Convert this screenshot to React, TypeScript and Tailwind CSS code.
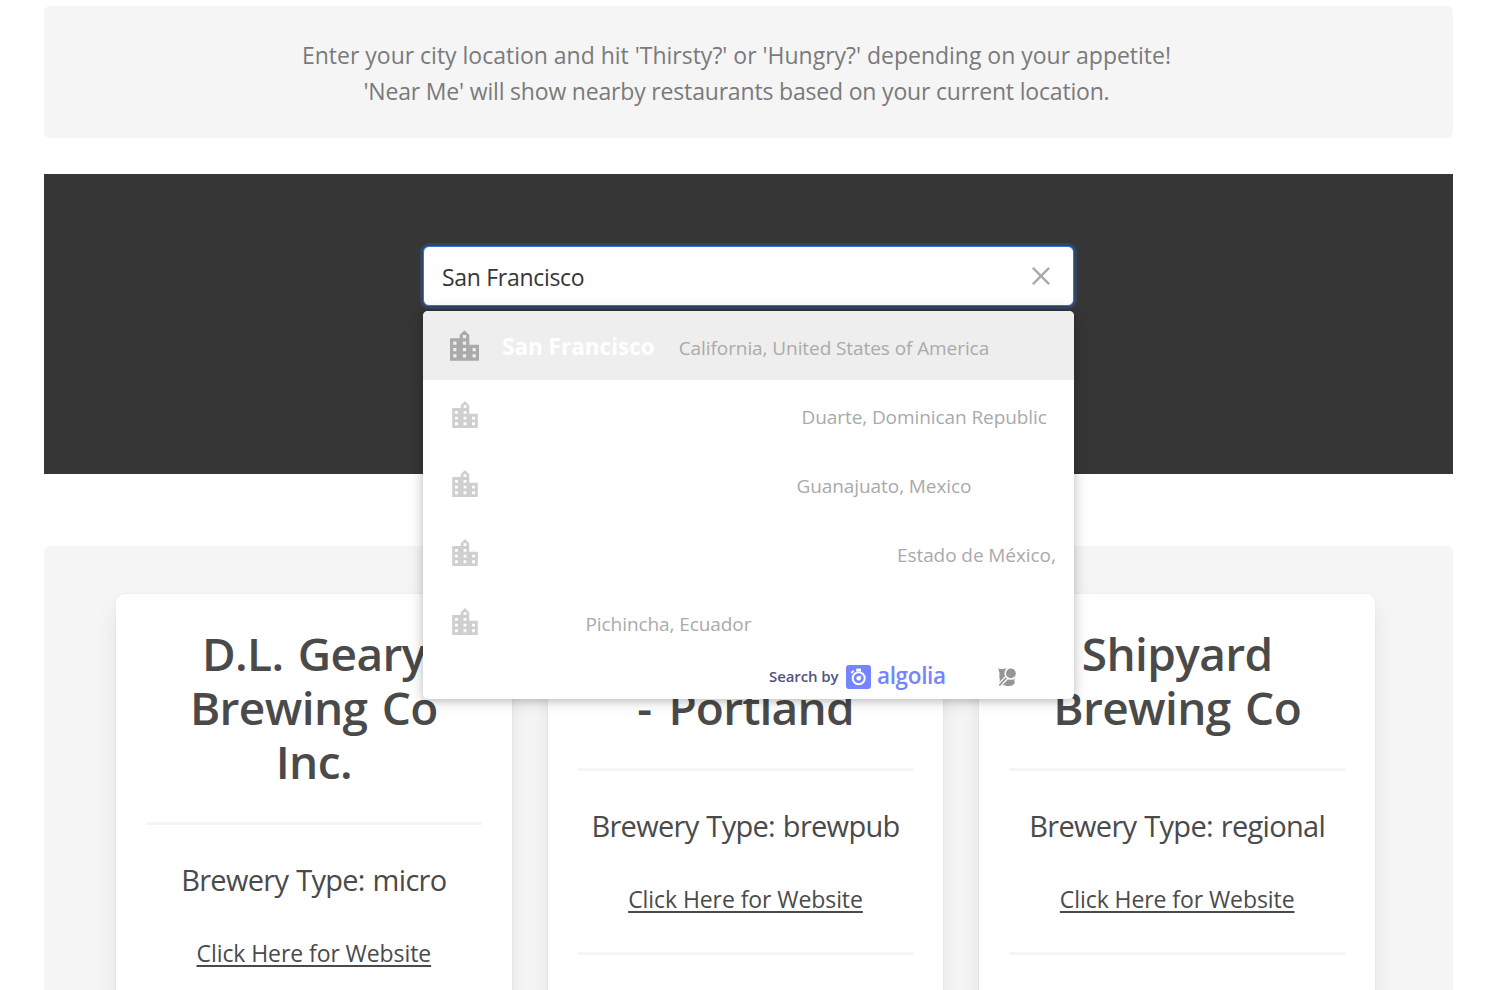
import React from "react";

const CITY_PATH =
  "M12 9V3L9 0 6 3v2H0v14h18V9h-6zm-8 8H2v-2h2v2zm0-4H2v-2h2v2zm0-4H2V7h2v2zm6 8H8v-2h2v2zm0-4H8v-2h2v2zm0-4H8V7h2v2zm0-4H8V3h2v2zm6 12h-2v-2h2v2zm0-4h-2v-2h2v2z";

function CityIcon({ active }: { active?: boolean }) {
  return (
    <svg
      viewBox="0 0 18 19"
      className={active ? "h-[31px] w-[29px] fill-[#aaaaaa]" : "h-[27px] w-[26px] fill-[#cfcfcf]"}
    >
      <path d={CITY_PATH} />
    </svg>
  );
}

function ClearIcon() {
  return (
    <svg viewBox="0 0 12 12" className="h-[18px] w-[18px] fill-[#aaaaaa]">
      <path d="M.566 1.698L0 1.13 1.132 0l.565.566L6 4.868 10.302.566 10.868 0 12 1.132l-.566.565L7.132 6l4.302 4.3.566.568L10.868 12l-.565-.566L6 7.132l-4.3 4.302L1.13 12 0 10.868l.566-.565L4.868 6 .566 1.698z" />
    </svg>
  );
}

function AlgoliaMark() {
  return (
    <svg viewBox="0 0 25 24" className="h-6 w-[25px] shrink-0">
      <rect width="25" height="24" rx="3" fill="#7585ff" />
      <circle cx="12.7" cy="13.2" r="6" fill="none" stroke="#fff" strokeWidth="2" />
      <path d="M10.2 3.6h4.8v2.8h-4.8z" fill="#fff" />
      <path d="M5.8 7.5l1.4-1.4" stroke="#fff" strokeWidth="1.8" strokeLinecap="round" />
      <circle cx="12.7" cy="13.2" r="2.3" fill="#fff" />
      <path d="M12.7 13.2l2.8-2.2" stroke="#fff" strokeWidth="1" />
    </svg>
  );
}

function MapIcon() {
  return (
    <svg viewBox="0 0 20 20" className="h-5 w-5 shrink-0">
      <path
        d="M1 1.2c2 1.1 3.800 1.100 5.500.6l3.500-.4 3-.3 5 .2-.2 4 .2 5-.6 3 .4 3-3 2.500-5 .1-3.500-.9-4.800 1.200L1.800 17c1.300-2.500 1.300-4.500.4-7.500.8-3 .1-5.300-1.200-8.300z"
        fill="#969696"
      />
      <path d="M1.500 19.300l8.200-8.800" stroke="#fff" strokeWidth="4.200" />
      <circle cx="13.900" cy="6.400" r="6.400" fill="#fff" />
      <path d="M2.300 18.400l7-7.500" stroke="#969696" strokeWidth="1.700" />
      <circle cx="13.900" cy="6.400" r="4.900" fill="#969696" />
    </svg>
  );
}

type Suggestion = { name?: string; place: string; pad: string };

const suggestions: Suggestion[] = [
  { name: "San Francisco", place: "California, United States of America", pad: "pl-6" },
  { place: "Duarte, Dominican Republic", pad: "pl-[300.5px]" },
  { place: "Guanajuato, Mexico", pad: "pl-[295.5px]" },
  { place: "Estado de México,", pad: "pl-[396px]" },
  { place: "Pichincha, Ecuador", pad: "pl-[84.5px]" },
];

function SuggestionList() {
  return (
    <div className="absolute left-0 top-[65px] z-10 h-[388px] w-[651px] overflow-hidden rounded-[5px] bg-white shadow-[0_1px_15px_rgba(0,0,0,0.2),0_3px_6px_0_rgba(0,0,0,0.1)]">
      {suggestions.map((s) => (
        <div
          key={s.place}
          className={s.name ? "flex h-[69px] items-center bg-[#eeeeee]" : "flex h-[69px] items-center"}
        >
          <div className={s.name ? "flex w-[78px] justify-center pl-[5px]" : "flex w-[78px] justify-center pl-[5px]"}>
            <CityIcon active={Boolean(s.name)} />
          </div>
          <div className="flex items-baseline whitespace-nowrap pt-1">
            {s.name && <span className="pl-px text-[22.5px] font-bold leading-9 text-white">{s.name}</span>}
            <span className={`${s.pad} text-[19px] leading-9 tracking-[-0.08px] text-[#aaaaaa]`}>{s.place}</span>
          </div>
        </div>
      ))}
      <div className="flex h-[43px] items-center pb-0.5 pl-[345px]">
        <span className="w-[78px] whitespace-nowrap pb-px pl-px text-[15px] font-semibold tracking-[-0.1px] text-[#50557f]">Search by</span>
        <AlgoliaMark />
        <span className="ml-1.5 w-[70px] pb-px text-[22.5px] font-semibold leading-6 tracking-[-0.35px] text-[#7585ff]">algolia</span>
        <div className="ml-[50px]">
          <MapIcon />
        </div>
      </div>
    </div>
  );
}

type Brewery = { title: string[]; type: string; gapAbove?: boolean };

const breweries: Brewery[] = [
  { title: ["D.L. Geary", "Brewing Co", "Inc."], type: "micro" },
  { title: ["- Portland"], type: "brewpub", gapAbove: true },
  { title: ["Shipyard", "Brewing Co"], type: "regional" },
];

function BreweryCard({ title, type, gapAbove }: Brewery) {
  return (
    <div className="h-[600px] flex-1 rounded-[9px] bg-white p-[30px] text-center text-[#4a4a4a] shadow-[0_12px_24px_-3px_rgba(10,10,10,0.1),0_0_0_1px_rgba(10,10,10,0.02)]">
      <h2
        className={
          gapAbove
            ? "-mb-0.5 whitespace-nowrap pt-14 text-[46px] font-semibold leading-[54px] tracking-[-0.8px] [word-spacing:6px]"
            : "-mb-0.5 whitespace-nowrap pt-0.5 text-[46px] font-semibold leading-[54px] tracking-[-0.6px] [word-spacing:3px]"
        }
      >
        {title.map((line) => (
          <span key={line} className="block">
            {line}
          </span>
        ))}
      </h2>
      <hr className="mb-[38px] mt-9 h-[3px] border-0 bg-[#f5f5f5]" />
      <p className="whitespace-nowrap text-[29px] leading-[34px] tracking-[-0.7px] [word-spacing:1px]">Brewery Type: {type}</p>
      <p className="mt-[38px] whitespace-nowrap text-[23px] leading-9 tracking-[-0.08px]">
        <a className="underline decoration-2 underline-offset-[3px]">Click Here for Website</a>
      </p>
      <hr className="mb-9 mt-[35px] h-[3px] border-0 bg-[#f5f5f5]" />
    </div>
  );
}

export default function App() {
  return (
    <main className="h-[990px] overflow-hidden bg-white pl-[44px] pr-[45px] pt-1.5 font-['Open_Sans',sans-serif]">
      <div className="h-[132px] rounded-md bg-[#f5f5f5] pb-[30px] pl-9 pr-[60px] pt-[31px] text-center text-[23px] leading-9 text-[#7a7a7a]">
        <p className="tracking-[-0.01px]">Enter your city location and hit 'Thirsty?' or 'Hungry?' depending on your appetite!</p>
        <p className="tracking-[-0.18px]">'Near Me' will show nearby restaurants based on your current location.</p>
      </div>

      <section className="mt-9 flex h-[300px] justify-center bg-[#363636] pt-[72px]">
        <div className="relative h-[60px] w-[651px]">
          <div className="flex h-[60px] items-center justify-between rounded-md border border-[#3273dc] bg-white pl-[17px] pr-[23px] shadow-[0_0_0_3px_rgba(50,115,220,0.25)]">
            <span className="pl-px pt-0.5 text-[23px] leading-9 tracking-[-0.3px] text-[#363636]">San Francisco</span>
            <ClearIcon />
          </div>
          <SuggestionList />
        </div>
      </section>

      <section className="mt-[72px] flex h-[600px] gap-9 rounded-md bg-[#f5f5f5] pl-[72px] pr-[78px] pt-12">
        {breweries.map((b) => (
          <BreweryCard key={b.type} {...b} />
        ))}
      </section>
    </main>
  );
}
